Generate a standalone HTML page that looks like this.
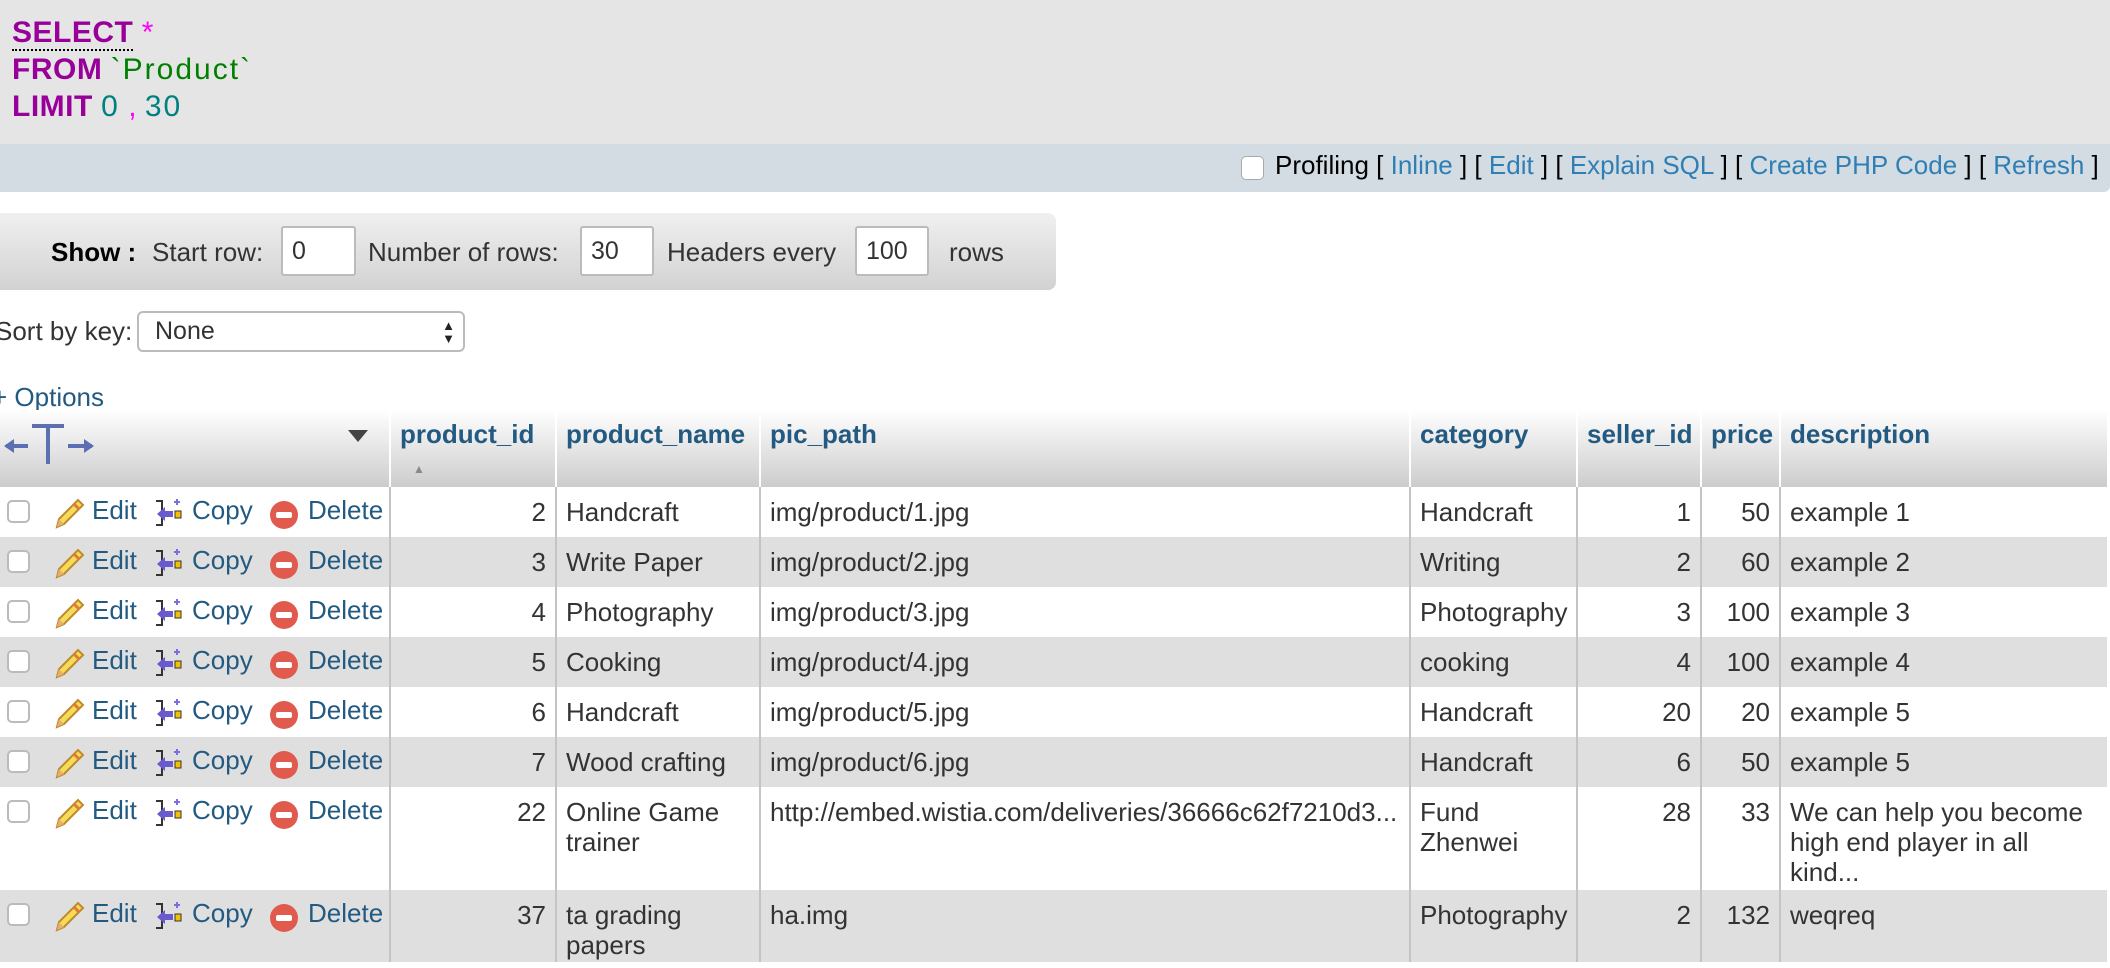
<!DOCTYPE html>
<html><head><meta charset="utf-8"><style>
*{margin:0;padding:0;box-sizing:border-box}
body{width:2110px;height:968px;overflow:hidden;background:#fff;font-family:"Liberation Sans",Arial,sans-serif;position:relative;color:#333}
.abs{position:absolute}
#sql{left:0;top:0;width:2110px;height:144px;background:#e5e5e5}
.sq{position:absolute;left:12px;font-size:30px;line-height:37px;white-space:pre}
.kw{color:#990099;font-weight:bold;letter-spacing:0.5px}
.lt{letter-spacing:2px}
#prof{left:0;top:144px;width:2110px;height:48px;background:#d3dce3;border-bottom-right-radius:6px;font-size:26px;color:#000}
#prof a{color:#2f7fb4;text-decoration:none}
#show{left:-10px;top:213px;width:1066px;height:77px;background:linear-gradient(#f0f0f0,#d2d2d2);border-radius:0 8px 8px 0}
.lab{position:absolute;font-size:26px;color:#333;line-height:30px}
.inp{position:absolute;background:#fff;border:2px solid #bbb;border-radius:3px;height:50px;font-size:25px;line-height:46px;padding-left:9px;color:#333}
table{position:absolute;left:0;top:410px;border-collapse:collapse;font-size:26px;table-layout:fixed;width:2107px}
th{height:77px;background:linear-gradient(#fff,#ccc);text-align:left;vertical-align:top;padding:9px 0 0 9px;color:#235a81;font-weight:bold;border-left:2px solid #fff;line-height:30px}
td{vertical-align:top;padding:10px 9px 0 9px;line-height:30px;border-left:2px solid #c4c4c4;color:#333}
tr.g td{background:#dfdfdf}
td.n{text-align:right}
td.act{border-left:none;padding:0;position:relative}
.cb{position:absolute;left:7px;top:13px;width:23px;height:23px;border:2px solid #bbb;border-radius:5px;background:#fff}
.lk{position:absolute;top:8px;color:#235a81;font-size:26px}
</style></head><body>
<div class="abs" id="sql">
<div class="sq" style="top:14px"><span class="kw" style="border-bottom:2px dotted #000">SELECT</span> <span style="color:#ff00ff">*</span></div>
<div class="sq" style="top:51px"><span class="kw">FROM</span> <span class="lt" style="color:#008000">`Product`</span></div>
<div class="sq" style="top:88px"><span class="kw">LIMIT</span> <span class="lt" style="color:#008080">0</span> <span style="color:#ff00ff">,</span> <span class="lt" style="color:#008080">30</span></div>
</div>
<div class="abs" id="prof">
<div class="abs" style="left:1241px;top:12px;width:23px;height:24px;background:#fff;border:1px solid #aaa;border-radius:5px"></div>
<div class="abs" style="left:1275px;top:6px;white-space:nowrap;line-height:30px">Profiling [ <a>Inline</a> ] [ <a>Edit</a> ] [ <a>Explain SQL</a> ] [ <a>Create PHP Code</a> ] [ <a>Refresh</a> ]</div>
</div>
<div class="abs" id="show"></div>
<div class="lab" style="left:51px;top:237px;color:#000;font-weight:bold">Show :</div>
<div class="lab" style="left:152px;top:237px">Start row:</div>
<div class="inp" style="left:281px;top:226px;width:75px">0</div>
<div class="lab" style="left:368px;top:237px">Number of rows:</div>
<div class="inp" style="left:580px;top:226px;width:74px">30</div>
<div class="lab" style="left:667px;top:237px">Headers every</div>
<div class="inp" style="left:855px;top:226px;width:74px">100</div>
<div class="lab" style="left:949px;top:237px">rows</div>
<div class="lab" style="left:-5px;top:316px">Sort by key:</div>
<div class="inp" style="left:137px;top:311px;width:328px;height:41px;line-height:37px;border-radius:6px;padding-left:16px">None<span style="position:absolute;right:8px;font-size:13px;line-height:13px;top:6px;color:#222">▲<br>▼</span></div>
<div class="lab" style="left:-8px;top:382px;color:#235a81">+ Options</div>
<table>
<colgroup><col style="width:390px"><col style="width:166px"><col style="width:204px"><col style="width:650px"><col style="width:167px"><col style="width:124px"><col style="width:79px"><col style="width:327px"></colgroup>
<tr><th style="border-left:none;position:relative;padding:0">
<svg class="abs" style="left:2px;top:10px" width="95" height="45" viewBox="0 0 95 45"><g fill="none" stroke="#5c6fb0" stroke-width="4"><path d="M4 26H26M30 6H62M46 6V44M66 26H90"/></g><path d="M2 26l10-7v14zM92 26l-10-7v14z" fill="#5c6fb0"/></svg>
<svg class="abs" style="left:347px;top:18px" width="22" height="16"><path d="M1 2h20L11 14z" fill="#444"/></svg>
</th><th>product_id<br><span style="font-size:12px;color:#888;padding-left:13px">▲</span></th><th>product_name</th><th>pic_path</th><th>category</th><th>seller_id</th><th>price</th><th>description</th></tr>
<tbody id="tb"></tbody>
</table>
<script>
var rows=[["2","Handcraft","img/product/1.jpg","Handcraft","1","50","example 1"],
["3","Write Paper","img/product/2.jpg","Writing","2","60","example 2"],
["4","Photography","img/product/3.jpg","Photography","3","100","example 3"],
["5","Cooking","img/product/4.jpg","cooking","4","100","example 4"],
["6","Handcraft","img/product/5.jpg","Handcraft","20","20","example 5"],
["7","Wood crafting","img/product/6.jpg","Handcraft","6","50","example 5"],
["22","Online Game trainer","http://embed.wistia.com/deliveries/36666c62f7210d3...","Fund Zhenwei","28","33","We can help you become high end player in all kind..."],
["37","ta grading papers","ha.img","Photography","2","132","weqreq"]];
var hs=[50,50,50,50,50,50,103,72];
var act='<div class="cb"></div>'+
'<svg class="abs" style="left:52px;top:10px" width="34" height="34" viewBox="0 0 34 34"><path d="M5 30l2-8L26 3l5 5L12 27z" fill="#f4dc5a" stroke="#c08a2a" stroke-width="2"/><path d="M5 30l2-8 5 5z" fill="#e8b070"/><path d="M22 7l5 5" stroke="#e07a3a" stroke-width="3"/></svg>'+
'<span class="lk" style="left:92px">Edit</span>'+
'<svg class="abs" style="left:153px;top:10px" width="30" height="32" viewBox="0 0 30 32"><path d="M3 4h6v24H3" fill="none" stroke="#333" stroke-width="2"/><path d="M4 17l8-7v4h8v6h-8v4z" fill="#6a5acd"/><rect x="22" y="14" width="6" height="7" fill="#f5c000" stroke="#333" stroke-width="1"/><path d="M24 2v6M21 5h6" stroke="#7b6fe0" stroke-width="2"/></svg>'+
'<span class="lk" style="left:192px">Copy</span>'+
'<svg class="abs" style="left:269px;top:13px" width="30" height="30"><circle cx="15" cy="15" r="14" fill="#e05a4e"/><rect x="7" y="12" width="16" height="6" rx="2" fill="#fff"/></svg>'+
'<span class="lk" style="left:308px">Delete</span>';
var h='';
rows.forEach(function(r,i){
h+='<tr class="'+(i%2?'g':'')+'" style="height:'+hs[i]+'px"><td class="act">'+act+'</td><td class="n">'+r[0]+'</td><td>'+r[1]+'</td><td style="white-space:nowrap;overflow:hidden">'+r[2]+'</td><td>'+r[3]+'</td><td class="n">'+r[4]+'</td><td class="n">'+r[5]+'</td><td>'+r[6]+'</td></tr>';
});
document.getElementById('tb').innerHTML=h;
</script>
</body></html>
